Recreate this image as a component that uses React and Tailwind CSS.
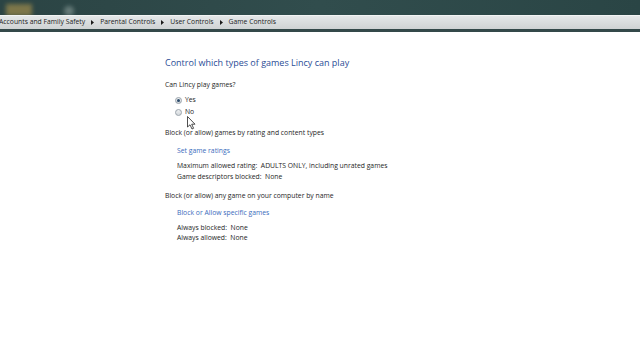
import React from 'react';

const Arrow = () => (
    <svg width="3" height="5" viewBox="0 0 3 5" className="mx-[6px]">
        <path d="M0 0 L3 2.5 L0 5 Z" fill="#1a1a1a"/>
    </svg>
);

const Radio = ({checked}) => (
    <span className="w-[7px] h-[7px] rounded-full border border-[#9aa3ab] bg-gradient-to-b from-[#eef0f2] to-[#d3d8dc] flex items-center justify-center">
        {checked && <span className="w-[3px] h-[3px] rounded-full bg-[#2a4a6a]"/>}
    </span>
);

const Cursor = () => (
    <svg width="9" height="14" viewBox="0 0 9 14" className="absolute left-[187px] top-[116px]">
        <path d="M0.5 0.5 L0.5 11 L3 8.8 L5 13 L6.6 12.3 L4.7 8.2 L8 8.2 Z" fill="#fff" stroke="#222" strokeWidth="0.8"/>
    </svg>
);

const App = () => {
    return (
        <div className="relative w-[640px] h-[360px] bg-white overflow-hidden text-[6.8px] text-[#1e1e1e]"
             style={{fontFamily: '"Open Sans", "Noto Sans", sans-serif'}}>
            <div className="h-[15px] bg-gradient-to-r from-[#2b4444] via-[#314d4d] to-[#2a4545] flex overflow-hidden">
                <div className="ml-[6px] mt-[4px] w-[26px] h-[12px] bg-[#a08c4c] opacity-70 blur-[2px]"/>
                <div className="ml-[32px] mt-[6px] w-[10px] h-[10px] rounded-full bg-[#9fb0ac] opacity-50 blur-[2px]"/>
            </div>
            <div className="h-[14px] bg-gradient-to-b from-[#e4e7e8] to-[#cfd3d4] border-t border-[#f2f4f4] flex items-center text-[#222] text-[6.8px]">
                <span className="-ml-[1px]">Accounts and Family Safety</span>
                <Arrow/>
                <span>Parental Controls</span>
                <Arrow/>
                <span>User Controls</span>
                <Arrow/>
                <span>Game Controls</span>
            </div>
            <div className="h-[3px] bg-[#34494a]"/>

            <div className="pl-[165px] pt-[24px]">
                <h1 className="text-[9px] leading-[14px] text-[#2a4d96]">Control which types of games Lincy can play</h1>

                <p className="mt-[10px] leading-[10px]">Can Lincy play games?</p>
                <div className="ml-[10px] mt-[5px] flex flex-col gap-[2px]">
                    <label className="flex items-center gap-[3px] h-[10px]"><Radio checked/>Yes</label>
                    <label className="flex items-center gap-[3px] h-[10px]"><Radio/>No</label>
                </div>

                <p className="mt-[11px] leading-[10px]">Block (or allow) games by rating and content types</p>
                <div className="ml-[12px]">
                    <p className="mt-[8px] leading-[10px] text-[#3a6cbc]">Set game ratings</p>
                    <p className="mt-[4px] leading-[11px]">Maximum allowed rating:&nbsp; ADULTS ONLY, including unrated games</p>
                    <p className="leading-[11px]">Game descriptors blocked:&nbsp; None</p>
                </div>

                <p className="mt-[9px] leading-[10px]">Block (or allow) any game on your computer by name</p>
                <div className="ml-[12px]">
                    <p className="mt-[7px] leading-[10px] text-[#3a6cbc]">Block or Allow specific games</p>
                    <p className="mt-[5px] leading-[10px]">Always blocked:&nbsp; None</p>
                    <p className="leading-[10px]">Always allowed:&nbsp; None</p>
                </div>
            </div>
            <Cursor/>
        </div>
    );
};

export default App;
